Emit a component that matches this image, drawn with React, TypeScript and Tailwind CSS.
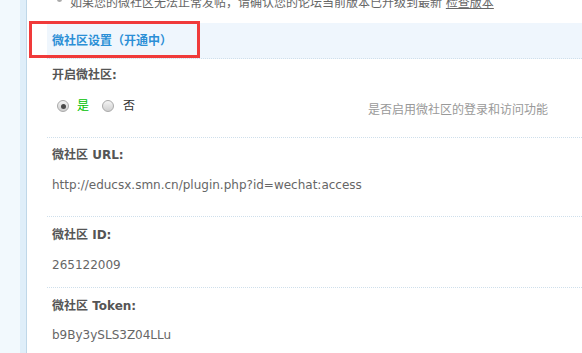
import React from 'react';

// 后台设置页面片段：微社区设置
const font = { fontFamily: '"DejaVu Sans", "Noto Sans CJK SC", sans-serif' };

const Radio = ({ checked }: { checked?: boolean }) => (
  <span className="relative inline-flex h-[12px] w-[12px] items-center justify-center rounded-full border border-[#a9a9a9] bg-gradient-to-b from-[#f4f4f4] to-[#cfcfcf]">
    {checked && <span className="h-[5px] w-[5px] rounded-full bg-[#4a4a4a]" />}
  </span>
);

const Field = ({ label, value, pt, gap, pb }: { label: string; value: string; pt: string; gap: string; pb: string }) => (
  <div className={`border-t border-dotted border-[#cfdfeb] pl-[5px] ${pt} ${pb}`}>
    <div className="h-[18px] text-[12px] font-bold leading-[18px] text-[#555]">{label}</div>
    <div className={`h-[18px] text-[12px] leading-[18px] text-[#666] ${gap}`}>{value}</div>
  </div>
);

export default function App() {
  return (
    <div className="flex h-[353px] w-[582px] overflow-hidden bg-white" style={font}>
      <div className="w-[20px] shrink-0 bg-[#f2f9fd]" />
      <div className="w-[6px] shrink-0 bg-[#dfeef9]" />
      <div className="w-px shrink-0 bg-[#bfd7e8]" />

      <div className="relative flex-1 pl-[20px]">
        {/* 顶部提示 */}
        <div className="-mt-[6px] flex h-[18px] items-center text-[12px] leading-[18px] text-[#666]">
          <span className="ml-[10px] mr-[8px] -mt-[8px] h-[5px] w-[5px] rounded-full bg-[#aaa]" />
          <span className="whitespace-nowrap">
            如果您的微社区无法正常发帖，请确认您的论坛当前版本已升级到最新 <span className="underline">检查版本</span>
          </span>
        </div>

        {/* 标题栏 */}
        <div className="mt-[11px] flex h-[36px] items-center border-b border-dotted border-[#cfdfeb] bg-[#eff6fd] pl-[5px] text-[12px] font-bold text-[#2b8fd6]">
          微社区设置（开通中）
        </div>

        {/* 开启微社区 */}
        <div className="pb-[22px] pt-[7px]">
          <div className="h-[18px] pl-[5px] text-[12px] font-bold leading-[18px] text-[#555]">开启微社区:</div>
          <div className="mt-[13px] flex h-[18px] items-start">
            <div className="flex h-[18px] w-[316px] shrink-0 items-center pl-[10px] text-[12px]">
              <Radio checked />
              <span className="ml-[8px] text-[#00c000]">是</span>
              <span className="ml-[13px]" />
              <Radio />
              <span className="ml-[9px] text-[#333]">否</span>
            </div>
            <div className="whitespace-nowrap pl-[5px] pt-[4px] text-[12px] leading-[18px] text-[#999]">是否启用微社区的登录和访问功能</div>
          </div>
        </div>

        <Field label="微社区 URL:" value="http://educsx.smn.cn/plugin.php?id=wechat:access" pt="pt-[8px]" gap="mt-[12px]" pb="pb-[22px]" />
        <Field label="微社区 ID:" value="265122009" pt="pt-[9px]" gap="mt-[12px]" pb="pb-[13px]" />
        <Field label="微社区 Token:" value="b9By3ySLS3Z04LLu" pt="pt-[9px]" gap="mt-[11px]" pb="pb-[10px]" />

        {/* 红色标注框 */}
        <div className="pointer-events-none absolute left-[2px] top-[21px] h-[37px] w-[171px] border-[3px] border-[#f03a3a]" />
      </div>
    </div>
  );
}
